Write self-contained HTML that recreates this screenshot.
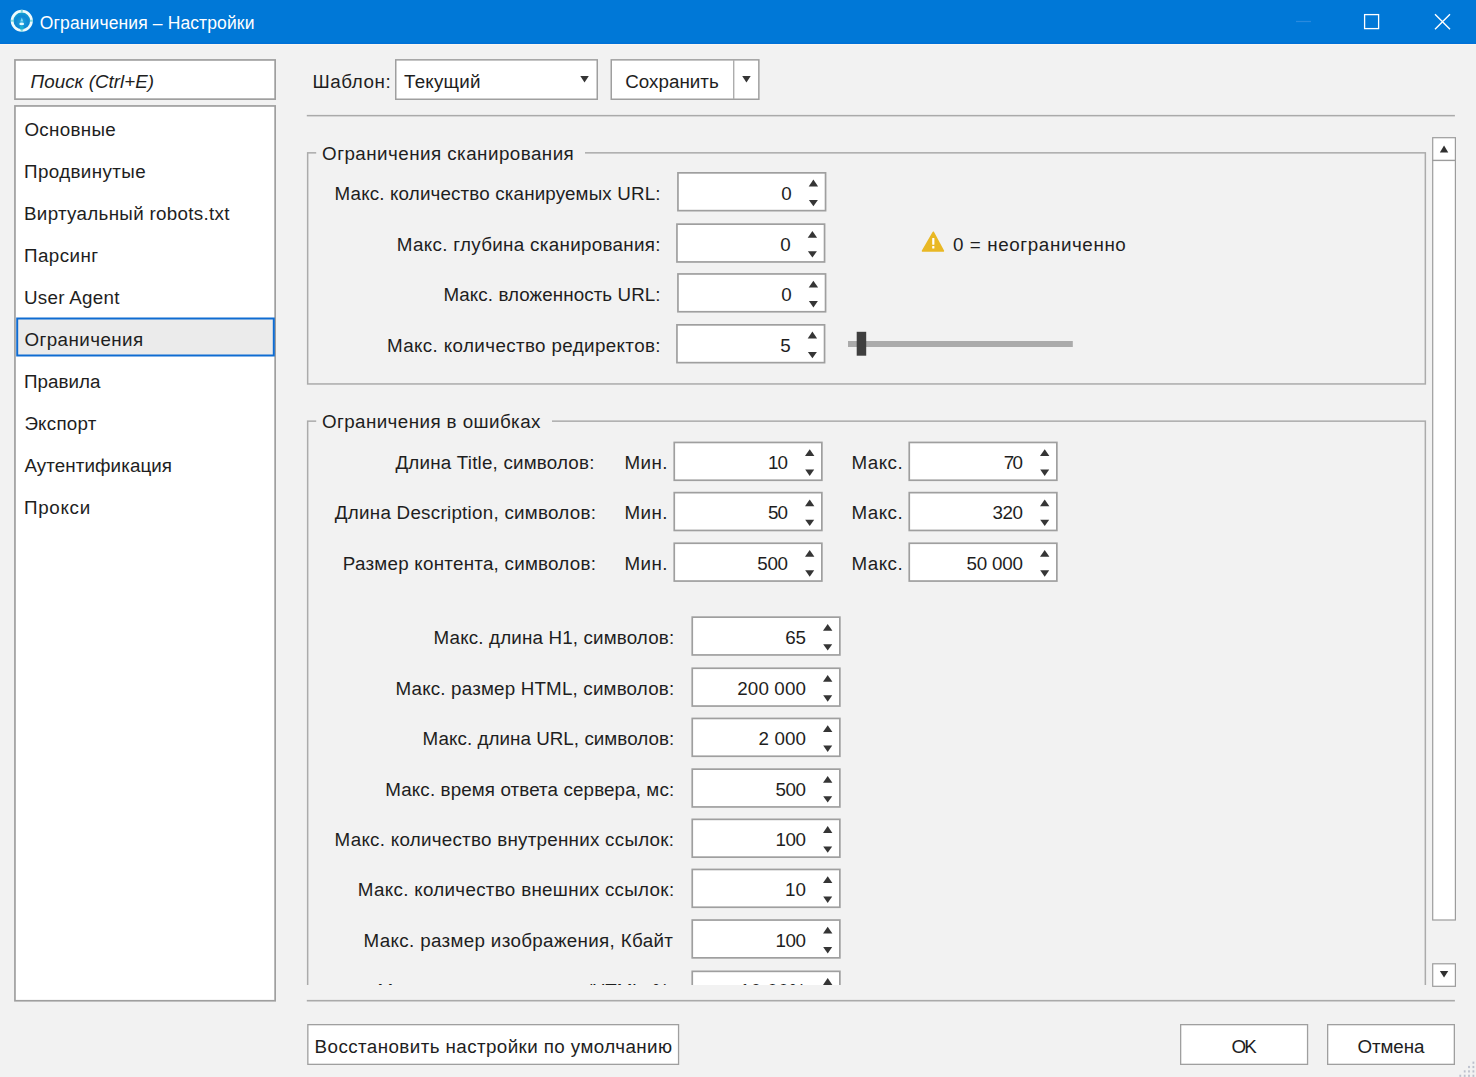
<!DOCTYPE html>
<html lang="ru"><head><meta charset="utf-8"><title>Ограничения – Настройки</title>
<style>
html,body{margin:0;padding:0;}
body{width:1476px;height:1077px;background:#f2f2f2;position:relative;overflow:hidden;font-family:"Liberation Sans",sans-serif;}
svg,span.t,#clip{position:absolute;}
svg{left:0;top:0;}
span.t{white-space:pre;line-height:24px;height:24px;font-size:18.8px;color:#1e1e1e;}
#clip{left:300px;top:130px;width:1130px;height:855px;overflow:hidden;}
</style></head>
<body>
<svg width="1476" height="1077" viewBox="0 0 1476 1077">
<rect x="0.00" y="0.00" width="1476.00" height="44.00" fill="#0078d7"/>
<rect x="0.00" y="42.60" width="1476.00" height="1.40" fill="#0071d8"/>
<rect x="0.00" y="44.00" width="1476.00" height="1.20" fill="#faf6f1"/>
<defs><radialGradient id="g" cx="50%" cy="58%" r="55%"><stop offset="0" stop-color="#1aa5dc"/><stop offset="0.6" stop-color="#0e86d4"/><stop offset="1" stop-color="#13a9cf"/></radialGradient></defs>
<circle cx="21.8" cy="20.8" r="9.7" fill="url(#g)" stroke="#eefafc" stroke-width="2.7"/>
<path d="M10.8 20.8 h3 M29.8 20.8 h3 M21.8 9.8 v2.6 M21.8 29.2 v2.6" stroke="#5fd0d6" stroke-width="2" opacity=".75"/>
<path d="M21.8 17.6 L23.3 21.4 L20.3 21.4 Z" fill="#7fd6f4"/>
<ellipse cx="21.7" cy="23.9" rx="2.4" ry="1.3" fill="#e6fbff"/>
<path d="M20 26 h3.6 v3.6 h-3.6 Z" fill="#18b6d2" opacity=".8"/>
<path d="M1296 21.5 H1311" stroke="#2a8ade" stroke-width="1.2" fill="none"/>
<rect x="1364.6" y="14.6" width="14" height="14" stroke="#fff" stroke-width="1.3" fill="none"/>
<path d="M1435 14.2 L1450 29.2 M1450 14.2 L1435 29.2" stroke="#fff" stroke-width="1.4" fill="none"/>
<rect x="14.95" y="59.95" width="260.20" height="39.20" fill="#fff" stroke="#9f9f9f" stroke-width="1.7"/>
<rect x="14.95" y="105.95" width="260.20" height="894.80" fill="#fff" stroke="#9f9f9f" stroke-width="1.7"/>
<rect x="17.20" y="318.50" width="256.60" height="37.00" fill="#ebebeb" stroke="#0f6cd2" stroke-width="2"/>
<rect x="395.75" y="59.85" width="201.50" height="39.40" fill="#fff" stroke="#9f9f9f" stroke-width="1.5"/>
<path d="M580.30 76.00 L588.80 76.00 L584.55 82.60 Z" fill="#353535"/>
<rect x="611.25" y="59.85" width="147.60" height="39.40" fill="#fff" stroke="#9f9f9f" stroke-width="1.5"/>
<rect x="733.00" y="60.00" width="1.40" height="39.00" fill="#adadad"/>
<path d="M742.20 76.00 L750.70 76.00 L746.45 82.60 Z" fill="#353535"/>
<rect x="306.80" y="114.90" width="1148.10" height="1.50" fill="#aaaaaa"/>
<rect x="1432.70" y="137.70" width="22.70" height="22.70" fill="#fff" stroke="#9c9c9c" stroke-width="1.2"/>
<path d="M1444.05 145.50 L1448.25 152.50 L1439.85 152.50 Z" fill="#303030"/>
<rect x="1432.70" y="160.50" width="22.70" height="759.50" fill="#fff" stroke="#9c9c9c" stroke-width="1.2"/>
<rect x="1432.70" y="963.80" width="22.70" height="22.50" fill="#fff" stroke="#9c9c9c" stroke-width="1.2"/>
<path d="M1439.85 971.00 L1448.25 971.00 L1444.05 977.50 Z" fill="#303030"/>
<rect x="306.80" y="999.90" width="1148.10" height="1.60" fill="#aaaaaa"/>
<rect x="307.85" y="1024.65" width="370.70" height="39.70" fill="#fff" stroke="#9f9f9f" stroke-width="1.3"/>
<rect x="1180.65" y="1024.65" width="126.90" height="39.70" fill="#fff" stroke="#9f9f9f" stroke-width="1.3"/>
<rect x="1327.65" y="1024.65" width="126.70" height="39.70" fill="#fff" stroke="#9f9f9f" stroke-width="1.3"/>
<g fill="#bcc0cc"><rect x="1472.5" y="1061.6" width="1.8" height="2.2"/><rect x="1472.5" y="1065.9" width="1.8" height="2.2"/><rect x="1472.5" y="1070.3" width="1.8" height="2.2"/><rect x="1472.5" y="1074.7" width="1.8" height="2.2"/><rect x="1468.1" y="1065.9" width="1.8" height="2.2"/><rect x="1468.1" y="1070.3" width="1.8" height="2.2"/><rect x="1468.1" y="1074.7" width="1.8" height="2.2"/><rect x="1463.8" y="1070.3" width="1.8" height="2.2"/><rect x="1463.8" y="1074.7" width="1.8" height="2.2"/><rect x="1459.4" y="1074.7" width="1.8" height="2.2"/></g>
</svg>
<span class="t" style="left:39.80px;top:11px;letter-spacing:0.122px;font-size:17.5px;color:#ffffff;">Ограничения – Настройки</span>
<span class="t" style="left:30.60px;top:70px;letter-spacing:0.021px;font-style:italic;">Поиск (Ctrl+E)</span>
<span class="t" style="left:24.40px;top:118px;letter-spacing:0.313px;">Основные</span>
<span class="t" style="left:24.00px;top:160px;letter-spacing:0.387px;">Продвинутые</span>
<span class="t" style="left:24.00px;top:202px;letter-spacing:0.306px;">Виртуальный robots.txt</span>
<span class="t" style="left:24.00px;top:244px;letter-spacing:0.436px;">Парсинг</span>
<span class="t" style="left:24.00px;top:286px;letter-spacing:0.287px;">User Agent</span>
<span class="t" style="left:24.40px;top:328px;letter-spacing:0.431px;">Ограничения</span>
<span class="t" style="left:24.00px;top:370px;letter-spacing:0.021px;">Правила</span>
<span class="t" style="left:24.40px;top:412px;letter-spacing:0.226px;">Экспорт</span>
<span class="t" style="left:24.40px;top:454px;letter-spacing:0.093px;">Аутентификация</span>
<span class="t" style="left:24.00px;top:496px;letter-spacing:0.691px;">Прокси</span>
<span class="t" style="left:312.40px;top:70px;letter-spacing:0.588px;">Шаблон:</span>
<span class="t" style="left:404.00px;top:70px;letter-spacing:0.217px;">Текущий</span>
<span class="t" style="left:625.20px;top:70px;letter-spacing:0.033px;">Сохранить</span>
<span class="t" style="left:314.60px;top:1035px;letter-spacing:0.417px;">Восстановить настройки по умолчанию</span>
<span class="t" style="left:1231.60px;top:1035px;letter-spacing:-2.066px;">OK</span>
<span class="t" style="left:1357.50px;top:1035px;letter-spacing:-0.098px;">Отмена</span>
<div id="clip">
<svg width="1130" height="855" viewBox="0 0 1130 855">
<rect x="7.65" y="22.85" width="1117.70" height="231.10" fill="none" stroke="#ababab" stroke-width="1.5"/>
<rect x="16.20" y="15.00" width="268.80" height="15.00" fill="#f2f2f2"/>
<rect x="377.95" y="42.85" width="147.60" height="37.80" fill="#fff" stroke="#9f9f9f" stroke-width="1.7"/>
<path d="M513.40 49.60 L518.10 56.40 L508.70 56.40 Z" fill="#353535"/>
<path d="M508.90 69.90 L517.90 69.90 L513.40 76.30 Z" fill="#353535"/>
<rect x="376.95" y="94.15" width="147.60" height="37.80" fill="#fff" stroke="#9f9f9f" stroke-width="1.7"/>
<path d="M512.40 100.90 L517.10 107.70 L507.70 107.70 Z" fill="#353535"/>
<path d="M507.90 121.20 L516.90 121.20 L512.40 127.60 Z" fill="#353535"/>
<rect x="377.95" y="143.95" width="147.60" height="37.80" fill="#fff" stroke="#9f9f9f" stroke-width="1.7"/>
<path d="M513.40 150.70 L518.10 157.50 L508.70 157.50 Z" fill="#353535"/>
<path d="M508.90 171.00 L517.90 171.00 L513.40 177.40 Z" fill="#353535"/>
<rect x="376.95" y="194.85" width="147.60" height="37.80" fill="#fff" stroke="#9f9f9f" stroke-width="1.7"/>
<path d="M512.40 201.60 L517.10 208.40 L507.70 208.40 Z" fill="#353535"/>
<path d="M507.90 221.90 L516.90 221.90 L512.40 228.30 Z" fill="#353535"/>
<g transform="translate(-300,-130)"><path d="M933.3 232.3 L943.3 250.9 L922.6 250.9 Z" fill="#e9b824" stroke="#e9b824" stroke-width="1.7" stroke-linejoin="round"/>
<rect x="932.2" y="238" width="2.2" height="6.8" rx="0.5" fill="#fff"/><rect x="932.2" y="246.1" width="2.2" height="2.5" rx="0.5" fill="#fff"/></g>
<rect x="548.00" y="211.00" width="224.80" height="6.00" fill="#ababab"/>
<rect x="556.70" y="201.80" width="9.50" height="23.90" fill="#3f3f3f"/>
<rect x="7.65" y="291.15" width="1117.70" height="598.10" fill="none" stroke="#ababab" stroke-width="1.5"/>
<rect x="16.20" y="283.00" width="235.80" height="15.00" fill="#f2f2f2"/>
<rect x="374.25" y="312.45" width="147.60" height="37.80" fill="#fff" stroke="#9f9f9f" stroke-width="1.7"/>
<path d="M509.70 319.20 L514.40 326.00 L505.00 326.00 Z" fill="#353535"/>
<path d="M505.20 339.50 L514.20 339.50 L509.70 345.90 Z" fill="#353535"/>
<rect x="609.25" y="312.45" width="147.60" height="37.80" fill="#fff" stroke="#9f9f9f" stroke-width="1.7"/>
<path d="M744.70 319.20 L749.40 326.00 L740.00 326.00 Z" fill="#353535"/>
<path d="M740.20 339.50 L749.20 339.50 L744.70 345.90 Z" fill="#353535"/>
<rect x="374.25" y="362.65" width="147.60" height="37.80" fill="#fff" stroke="#9f9f9f" stroke-width="1.7"/>
<path d="M509.70 369.40 L514.40 376.20 L505.00 376.20 Z" fill="#353535"/>
<path d="M505.20 389.70 L514.20 389.70 L509.70 396.10 Z" fill="#353535"/>
<rect x="609.25" y="362.65" width="147.60" height="37.80" fill="#fff" stroke="#9f9f9f" stroke-width="1.7"/>
<path d="M744.70 369.40 L749.40 376.20 L740.00 376.20 Z" fill="#353535"/>
<path d="M740.20 389.70 L749.20 389.70 L744.70 396.10 Z" fill="#353535"/>
<rect x="374.25" y="413.25" width="147.60" height="37.80" fill="#fff" stroke="#9f9f9f" stroke-width="1.7"/>
<path d="M509.70 420.00 L514.40 426.80 L505.00 426.80 Z" fill="#353535"/>
<path d="M505.20 440.30 L514.20 440.30 L509.70 446.70 Z" fill="#353535"/>
<rect x="609.25" y="413.25" width="147.60" height="37.80" fill="#fff" stroke="#9f9f9f" stroke-width="1.7"/>
<path d="M744.70 420.00 L749.40 426.80 L740.00 426.80 Z" fill="#353535"/>
<path d="M740.20 440.30 L749.20 440.30 L744.70 446.70 Z" fill="#353535"/>
<rect x="392.25" y="487.15" width="147.60" height="37.80" fill="#fff" stroke="#9f9f9f" stroke-width="1.7"/>
<path d="M527.70 493.90 L532.40 500.70 L523.00 500.70 Z" fill="#353535"/>
<path d="M523.20 514.20 L532.20 514.20 L527.70 520.60 Z" fill="#353535"/>
<rect x="392.25" y="538.25" width="147.60" height="37.80" fill="#fff" stroke="#9f9f9f" stroke-width="1.7"/>
<path d="M527.70 545.00 L532.40 551.80 L523.00 551.80 Z" fill="#353535"/>
<path d="M523.20 565.30 L532.20 565.30 L527.70 571.70 Z" fill="#353535"/>
<rect x="392.25" y="588.45" width="147.60" height="37.80" fill="#fff" stroke="#9f9f9f" stroke-width="1.7"/>
<path d="M527.70 595.20 L532.40 602.00 L523.00 602.00 Z" fill="#353535"/>
<path d="M523.20 615.50 L532.20 615.50 L527.70 621.90 Z" fill="#353535"/>
<rect x="392.25" y="639.15" width="147.60" height="37.80" fill="#fff" stroke="#9f9f9f" stroke-width="1.7"/>
<path d="M527.70 645.90 L532.40 652.70 L523.00 652.70 Z" fill="#353535"/>
<path d="M523.20 666.20 L532.20 666.20 L527.70 672.60 Z" fill="#353535"/>
<rect x="392.25" y="689.35" width="147.60" height="37.80" fill="#fff" stroke="#9f9f9f" stroke-width="1.7"/>
<path d="M527.70 696.10 L532.40 702.90 L523.00 702.90 Z" fill="#353535"/>
<path d="M523.20 716.40 L532.20 716.40 L527.70 722.80 Z" fill="#353535"/>
<rect x="392.25" y="739.45" width="147.60" height="37.80" fill="#fff" stroke="#9f9f9f" stroke-width="1.7"/>
<path d="M527.70 746.20 L532.40 753.00 L523.00 753.00 Z" fill="#353535"/>
<path d="M523.20 766.50 L532.20 766.50 L527.70 772.90 Z" fill="#353535"/>
<rect x="392.25" y="790.05" width="147.60" height="37.80" fill="#fff" stroke="#9f9f9f" stroke-width="1.7"/>
<path d="M527.70 796.80 L532.40 803.60 L523.00 803.60 Z" fill="#353535"/>
<path d="M523.20 817.10 L532.20 817.10 L527.70 823.50 Z" fill="#353535"/>
<rect x="392.25" y="841.35" width="147.60" height="37.80" fill="#fff" stroke="#9f9f9f" stroke-width="1.7"/>
<path d="M527.70 848.10 L532.40 854.90 L523.00 854.90 Z" fill="#353535"/>
<path d="M523.20 868.40 L532.20 868.40 L527.70 874.80 Z" fill="#353535"/>
</svg>
<span class="t" style="left:22.10px;top:12px;letter-spacing:0.457px;">Ограничения сканирования</span>
<span class="t" style="left:34.60px;top:52px;letter-spacing:0.149px;">Макс. количество сканируемых URL:</span>
<span class="t" style="left:481.27px;top:52px;letter-spacing:0.500px;">0</span>
<span class="t" style="left:96.80px;top:103px;letter-spacing:0.316px;">Макс. глубина сканирования:</span>
<span class="t" style="left:480.27px;top:103px;letter-spacing:0.500px;">0</span>
<span class="t" style="left:143.40px;top:153px;letter-spacing:0.080px;">Макс. вложенность URL:</span>
<span class="t" style="left:481.27px;top:153px;letter-spacing:0.500px;">0</span>
<span class="t" style="left:87.00px;top:204px;letter-spacing:0.375px;">Макс. количество редиректов:</span>
<span class="t" style="left:480.27px;top:204px;letter-spacing:0.500px;">5</span>
<span class="t" style="left:653.00px;top:103px;letter-spacing:0.605px;">0 = неограниченно</span>
<span class="t" style="left:21.90px;top:280px;letter-spacing:0.419px;">Ограничения в ошибках</span>
<span class="t" style="left:95.40px;top:321px;letter-spacing:0.198px;">Длина Title, символов:</span>
<span class="t" style="left:324.40px;top:321px;letter-spacing:0.472px;">Мин.</span>
<span class="t" style="left:468.00px;top:321px;letter-spacing:-0.915px;">10</span>
<span class="t" style="left:551.40px;top:321px;letter-spacing:0.501px;">Макс.</span>
<span class="t" style="left:703.80px;top:321px;letter-spacing:-1.715px;">70</span>
<span class="t" style="left:34.80px;top:371px;letter-spacing:0.264px;">Длина Description, символов:</span>
<span class="t" style="left:324.40px;top:371px;letter-spacing:0.472px;">Мин.</span>
<span class="t" style="left:468.10px;top:371px;letter-spacing:-1.015px;">50</span>
<span class="t" style="left:551.40px;top:371px;letter-spacing:0.501px;">Макс.</span>
<span class="t" style="left:692.40px;top:371px;letter-spacing:-0.374px;">320</span>
<span class="t" style="left:42.80px;top:422px;letter-spacing:0.249px;">Размер контента, символов:</span>
<span class="t" style="left:324.40px;top:422px;letter-spacing:0.472px;">Мин.</span>
<span class="t" style="left:457.30px;top:422px;letter-spacing:-0.324px;">500</span>
<span class="t" style="left:551.40px;top:422px;letter-spacing:0.501px;">Макс.</span>
<span class="t" style="left:666.50px;top:422px;letter-spacing:-0.196px;">50 000</span>
<span class="t" style="left:133.60px;top:496px;letter-spacing:0.154px;">Макс. длина H1, символов:</span>
<span class="t" style="left:485.30px;top:496px;letter-spacing:-0.215px;">65</span>
<span class="t" style="left:95.50px;top:547px;letter-spacing:0.178px;">Макс. размер HTML, символов:</span>
<span class="t" style="left:437.30px;top:547px;letter-spacing:0.123px;">200 000</span>
<span class="t" style="left:122.60px;top:597px;letter-spacing:0.046px;">Макс. длина URL, символов:</span>
<span class="t" style="left:458.50px;top:597px;letter-spacing:0.113px;">2 000</span>
<span class="t" style="left:85.30px;top:648px;letter-spacing:0.116px;">Макс. время ответа сервера, мс:</span>
<span class="t" style="left:475.40px;top:648px;letter-spacing:-0.374px;">500</span>
<span class="t" style="left:34.60px;top:698px;letter-spacing:0.262px;">Макс. количество внутренних ссылок:</span>
<span class="t" style="left:475.40px;top:698px;letter-spacing:-0.374px;">100</span>
<span class="t" style="left:57.80px;top:748px;letter-spacing:0.307px;">Макс. количество внешних ссылок:</span>
<span class="t" style="left:485.00px;top:748px;letter-spacing:0.085px;">10</span>
<span class="t" style="left:63.60px;top:799px;letter-spacing:0.339px;">Макс. размер изображения, Кбайт</span>
<span class="t" style="left:475.40px;top:799px;letter-spacing:-0.374px;">100</span>
<span class="t" style="left:77.50px;top:849px;letter-spacing:-0.194px;">Мин. соотношение текст/HTML, %:</span>
<span class="t" style="left:439.72px;top:849px;letter-spacing:0.500px;">10.00%</span>
</div>
</body></html>
